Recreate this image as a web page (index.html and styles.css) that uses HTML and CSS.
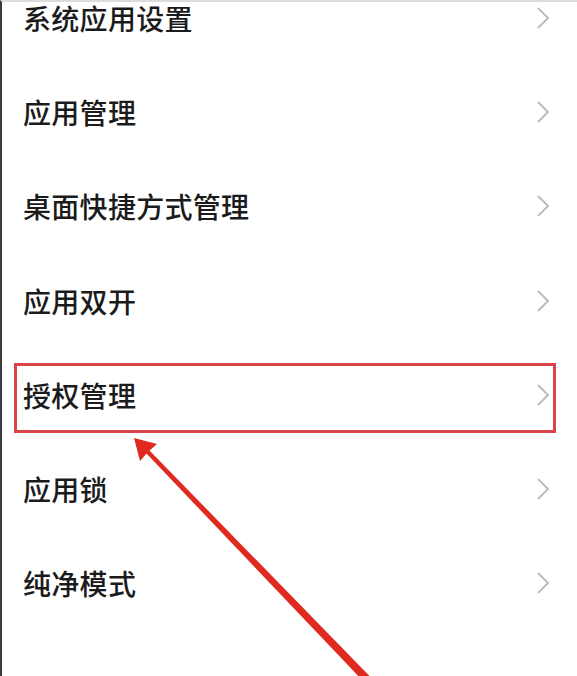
FILE: index.html
```html
<!DOCTYPE html>
<html lang="zh-CN">
<head>
  <meta charset="UTF-8" />
  <title>应用设置</title>
  <link rel="stylesheet" href="styles.css">
</head>
<body>
  <div class="screen">
    <ul class="menu">
      <li class="item"><span>系统应用设置</span><svg class="chev" viewBox="0 0 14 24"><polyline points="2,2 12,12 2,22" /></svg></li>
      <li class="item"><span>应用管理</span><svg class="chev" viewBox="0 0 14 24"><polyline points="2,2 12,12 2,22" /></svg></li>
      <li class="item"><span>桌面快捷方式管理</span><svg class="chev" viewBox="0 0 14 24"><polyline points="2,2 12,12 2,22" /></svg></li>
      <li class="item"><span>应用双开</span><svg class="chev" viewBox="0 0 14 24"><polyline points="2,2 12,12 2,22" /></svg></li>
      <li class="item marked"><span>授权管理</span><svg class="chev" viewBox="0 0 14 24"><polyline points="2,2 12,12 2,22" /></svg></li>
      <li class="item"><span>应用锁</span><svg class="chev" viewBox="0 0 14 24"><polyline points="2,2 12,12 2,22" /></svg></li>
      <li class="item"><span>纯净模式</span><svg class="chev" viewBox="0 0 14 24"><polyline points="2,2 12,12 2,22" /></svg></li>
    </ul>

    <!-- annotation arrow pointing at the marked row -->
    <svg class="arrow" viewBox="0 0 577 676">
      <polygon points="134,438 157,444 149.5,450.5 390,697 384,703 146.5,453.5 140,461" />
    </svg>
  </div>
</body>
</html>
```

FILE: styles.css
```css
html, body {
  margin: 0;
  padding: 0;
  background: #fff;
}

body {
  font-family: "Noto Sans CJK SC", "Noto Sans", sans-serif;
  color: #1b1b1b;
}

.screen {
  position: relative;
  width: 577px;
  height: 676px;
  overflow: hidden;
  box-sizing: border-box;
  border-left: 2px solid #3a3a3a;
  border-top: 2px solid #dcdcdc;
}

.menu {
  list-style: none;
  margin: -31px 0 0 0;
  padding: 0 25px 0 21px;
}

.item {
  position: relative;
  display: flex;
  align-items: center;
  justify-content: space-between;
  height: 94.2px;
  font-size: 28px;
  font-weight: 500;
  letter-spacing: 0.3px;
}

.chev {
  width: 14px;
  height: 24px;
  margin-right: 2px;
}

.chev polyline {
  fill: none;
  stroke: #bdbdbd;
  stroke-width: 2;
}

.marked::after {
  content: "";
  position: absolute;
  left: -9px;
  right: -4px;
  top: 15px;
  bottom: 9px;
  border: 3px solid #d9444a;
}

.arrow {
  position: absolute;
  left: -2px;
  top: -2px;
  width: 577px;
  height: 676px;
  pointer-events: none;
}

.arrow polygon {
  fill: #e0291f;
}
```
